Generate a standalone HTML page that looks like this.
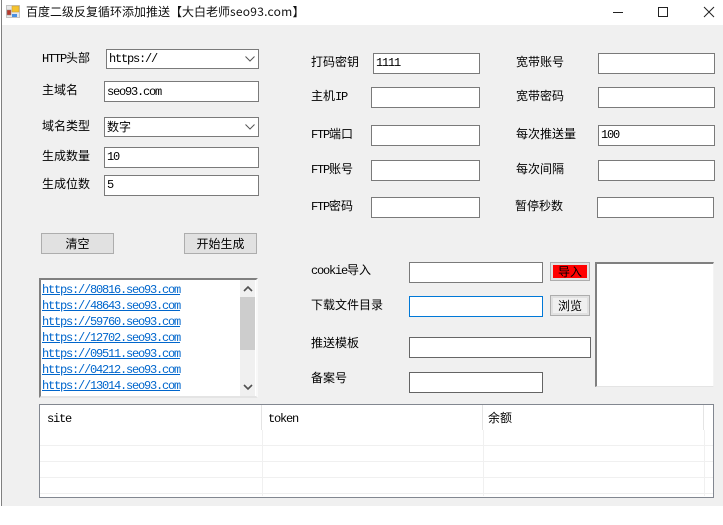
<!DOCTYPE html>
<html><head><meta charset="utf-8">
<style>
html,body{margin:0;padding:0;background:#fff;}
body{width:723px;height:525px;position:relative;overflow:hidden;font-family:"WenQuanYi Zen Hei","Noto Sans CJK SC",sans-serif;font-size:12px;color:#000;}
div,span.a{position:absolute;box-sizing:border-box;}
.t{height:16px;line-height:16px;white-space:nowrap;}
.l{font-family:"Liberation Mono",monospace;font-size:12px;letter-spacing:-1.2px;}
.i{background:#fff;border:1px solid #7a7a7a;height:21px;line-height:19px;padding-left:2px;white-space:nowrap;}
.b{background:#e1e1e1;border:1px solid #adadad;text-align:center;}
.r{left:40px;width:673px;height:1px;background:#f0f0f0;}
.v{top:430px;width:1px;height:66px;background:#f0f0f0;}
.h{top:405px;width:1px;height:25px;background:#e4e4e4;}
.u{left:42px;height:16px;line-height:16px;color:#0066cc;text-decoration:underline;font-family:"Liberation Mono",monospace;font-size:12px;letter-spacing:-1.2px;white-space:nowrap;}
</style></head><body>
<div style="left:0;top:0;width:723px;height:25px;background:#fff;"></div>
<div style="left:2px;top:25px;width:721px;height:481px;background:#f0f0f0;"></div>
<div style="left:1px;top:0;width:1px;height:506px;background:#808080;"></div>

<svg style="position:absolute;left:6px;top:5px" width="14" height="13" viewBox="0 0 14 13">
<rect x=".5" y=".5" width="13" height="12" fill="#e8e8e8" stroke="#c4c4c4"/>
<rect x="6" y="1" width="7" height="6" fill="#f5c32c" stroke="#c9a040" stroke-width=".6"/>
<rect x="1" y="5" width="4" height="5" fill="#b83a2c" stroke="#8a8a8a" stroke-width=".5"/>
<rect x="6" y="9" width="5" height="3" fill="#4a90e2"/>
</svg>
<div class="t" style="left:26px;top:4px;font-family:'Noto Sans CJK SC',sans-serif;color:#111;">百度二级反复循环添加推送【大白老师<span style="letter-spacing:.25px">seo93.com</span>】</div>
<svg style="position:absolute;left:610px;top:4px" width="110" height="16" viewBox="0 0 110 16" fill="none" stroke="#222">
<path d="M3 8.5H13"/>
<rect x="48.5" y="3.5" width="9" height="9"/>
<path d="M94 3L104 13M104 3L94 13"/>
</svg>

<!-- left column -->
<div class="t" style="left:42px;top:50px;"><span class="l">HTTP</span>头部</div>
<div class="i l" style="left:106px;top:49px;width:153px;height:20px;line-height:19px;padding-left:2px;">https://</div>
<svg style="position:absolute;left:245px;top:55px" width="10" height="8" fill="none" stroke="#555"><path d="M0.5 1.5L5 6L9.5 1.5"/></svg>
<div class="t" style="left:42px;top:82px;">主域名</div>
<div class="i l" style="left:104px;top:81px;width:155px;line-height:20px;">seo93.com</div>
<div class="t" style="left:42px;top:118px;">域名类型</div>
<div class="i" style="left:104px;top:117px;width:155px;height:20px;line-height:18px;padding-left:2px;">数字</div>
<svg style="position:absolute;left:245px;top:123px" width="10" height="8" fill="none" stroke="#555"><path d="M0.5 1.5L5 6L9.5 1.5"/></svg>
<div class="t" style="left:42px;top:148px;">生成数量</div>
<div class="i l" style="left:104px;top:147px;width:155px;">10</div>
<div class="t" style="left:42px;top:176px;">生成位数</div>
<div class="i l" style="left:104px;top:175px;width:155px;">5</div>

<div class="b" style="left:41px;top:233px;width:73px;height:21px;line-height:19px;">清空</div>
<div class="b" style="left:184px;top:233px;width:73px;height:21px;line-height:19px;">开始生成</div>

<!-- list -->
<div style="left:39px;top:278px;width:219px;height:120px;background:#fff;border-top:2px solid #808080;border-left:2px solid #808080;border-right:2px solid #f8f8f8;border-bottom:2px solid #e4e4e4;"></div>
<div style="left:240px;top:280px;width:15px;height:116px;background:#f0f0f0;"></div>
<div style="left:240px;top:297px;width:15px;height:53px;background:#cdcdcd;"></div>
<svg style="position:absolute;left:243px;top:285px" width="10" height="8" fill="none" stroke="#505050" stroke-width="1.6"><path d="M1 6L5 2L9 6"/></svg>
<svg style="position:absolute;left:243px;top:383px" width="10" height="8" fill="none" stroke="#505050" stroke-width="1.6"><path d="M1 2L5 6L9 2"/></svg>
<div class="u" style="top:282px;">https://80816.seo93.com</div>
<div class="u" style="top:298px;">https://48643.seo93.com</div>
<div class="u" style="top:314px;">https://59760.seo93.com</div>
<div class="u" style="top:330px;">https://12702.seo93.com</div>
<div class="u" style="top:346px;">https://09511.seo93.com</div>
<div class="u" style="top:362px;">https://04212.seo93.com</div>
<div class="u" style="top:378px;">https://13014.seo93.com</div>

<!-- middle column -->
<div class="t" style="left:311px;top:54px;">打码密钥</div>
<div class="i l" style="left:373px;top:53px;width:107px;">1111</div>
<div class="t" style="left:311px;top:88px;">主机<span class="l">IP</span></div>
<div class="i" style="left:371px;top:87px;width:109px;"></div>
<div class="t" style="left:311px;top:126px;"><span class="l">FTP</span>端口</div>
<div class="i" style="left:371px;top:125px;width:109px;"></div>
<div class="t" style="left:311px;top:161px;"><span class="l">FTP</span>账号</div>
<div class="i" style="left:371px;top:160px;width:109px;"></div>
<div class="t" style="left:311px;top:198px;"><span class="l">FTP</span>密码</div>
<div class="i" style="left:371px;top:197px;width:109px;"></div>

<!-- right column -->
<div class="t" style="left:516px;top:54px;">宽带账号</div>
<div class="i" style="left:598px;top:53px;width:117px;"></div>
<div class="t" style="left:516px;top:88px;">宽带密码</div>
<div class="i" style="left:598px;top:87px;width:117px;"></div>
<div class="t" style="left:516px;top:126px;">每次推送量</div>
<div class="i l" style="left:598px;top:125px;width:117px;">100</div>
<div class="t" style="left:516px;top:161px;">每次间隔</div>
<div class="i" style="left:598px;top:160px;width:117px;"></div>
<div class="t" style="left:515px;top:198px;">暂停秒数</div>
<div class="i" style="left:597px;top:197px;width:117px;"></div>

<!-- lower block -->
<div class="t" style="left:311px;top:262px;"><span class="l">cookie</span>导入</div>
<div class="i" style="left:409px;top:262px;width:134px;"></div>
<div class="b" style="left:550px;top:262px;width:40px;height:19px;"></div>
<div style="left:553px;top:265px;width:34px;height:13px;background:#ff0000;text-align:center;line-height:13px;">导入</div>
<div class="t" style="left:311px;top:297px;">下载文件目录</div>
<div class="i" style="left:409px;top:296px;width:134px;border-color:#0078d7;"></div>
<div class="b" style="left:550px;top:295px;width:40px;height:21px;"></div>
<div style="left:553px;top:298px;width:34px;height:15px;background:#f0f0f0;text-align:center;line-height:15px;">浏览</div>
<div class="t" style="left:311px;top:335px;">推送模板</div>
<div class="i" style="left:409px;top:337px;width:182px;border-color:#666;"></div>
<div class="t" style="left:311px;top:370px;">备案号</div>
<div class="i" style="left:409px;top:372px;width:134px;border-color:#646464;"></div>
<div style="left:595px;top:262px;width:119px;height:125px;background:#fff;border-top:2px solid #808080;border-left:2px solid #808080;border-right:1px solid #f4f4f4;border-bottom:1px solid #e4e4e4;"></div>

<!-- grid -->
<div style="left:39px;top:404px;width:675px;height:94px;background:#fff;border:1px solid #828790;"></div>
<div class="h" style="left:261px;"></div>
<div class="h" style="left:482px;"></div>
<div class="h" style="left:703px;"></div>
<div class="v" style="left:262px;"></div>
<div class="v" style="left:483px;"></div>
<div class="v" style="left:704px;"></div>
<div class="r" style="top:445px;"></div>
<div class="r" style="top:461px;"></div>
<div class="r" style="top:477px;"></div>
<div class="r" style="top:493px;"></div>
<div class="t l" style="left:47px;top:411px;">site</div>
<div class="t l" style="left:268px;top:411px;">token</div>
<div class="t" style="left:488px;top:410px;">余额</div>
</body></html>
